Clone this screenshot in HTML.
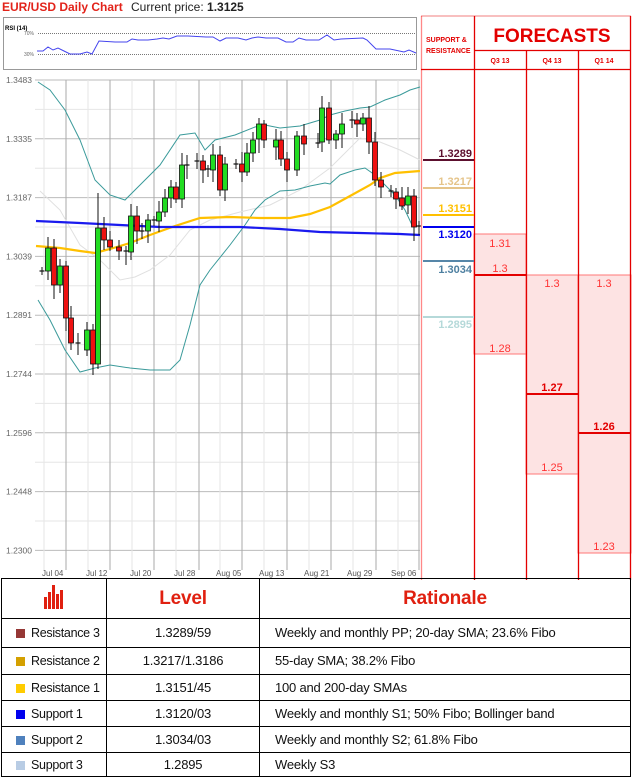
<!DOCTYPE html>
<html><head><meta charset="utf-8"><style>
body{margin:0;width:632px;height:780px;background:#fff;font-family:"Liberation Sans",sans-serif;overflow:hidden;position:relative}
.t{position:absolute;white-space:nowrap}
table{position:absolute;left:1px;top:578px;width:630px;border-collapse:collapse;table-layout:fixed}
td{border:1.5px solid #000;font-size:13px;letter-spacing:-0.2px;color:#111;padding:0;white-space:nowrap;overflow:hidden;line-height:14px}
td.f{font-size:12.5px;letter-spacing:-0.3px}
.sq{display:inline-block;width:9px;height:9px;margin:0 6px 0 14px;vertical-align:-1px}
</style></head><body>
<div class="t" style="left:2px;top:0;font-size:12px;font-weight:bold;color:#e2231a">EUR/USD Daily Chart</div>
<div class="t" style="left:131px;top:0;font-size:12px;color:#222">Current price: <b>1.3125</b></div>
<svg width="632" height="580" style="position:absolute;left:0;top:0">
<rect x="3.5" y="17.5" width="413" height="52" fill="#fff" stroke="#999"/>
<text x="5" y="30" font-size="6" font-family="Liberation Sans" font-weight="bold">RSI (14)</text>
<line x1="38" y1="33.5" x2="416" y2="33.5" stroke="#777" stroke-dasharray="1,1"/>
<line x1="38" y1="54.5" x2="416" y2="54.5" stroke="#777" stroke-dasharray="1,1"/>
<text x="24" y="35" font-size="5" fill="#666" font-family="Liberation Sans">70%</text>
<text x="24" y="56" font-size="5" fill="#666" font-family="Liberation Sans">30%</text>
<polyline fill="none" stroke="#4444ee" stroke-width="1" points="37,51 43,51 48,47 53,50 58,48 64,51 70,54 80,54 87,52 92,54 99,41 115,42 127,42 132,39 138,40 148,40 157,39 163,38 169,39 177,36 188,36 206,37 213,37 220,41 226,38 238,38 246,40 252,38 258,37 266,38 278,38 286,42 293,42 299,38 306,40 319,40 327,35 334,40 341,39 363,38 367,40 376,49 390,49 404,52 409,50 416,53"/>
<rect x="0" y="79" width="420" height="491" fill="#fff"/>
<g id="grid"></g>
<g id="ind"></g>
<g id="cd"></g>
<g font-family="Liberation Sans" font-size="8.5" fill="#666" id="pl"></g>
<g font-family="Liberation Sans" font-size="8" fill="#555">
<text x="42" y="576">Jul 04</text><text x="86" y="576">Jul 12</text><text x="130" y="576">Jul 20</text><text x="174" y="576">Jul 28</text><text x="216" y="576">Aug 05</text><text x="259" y="576">Aug 13</text><text x="304" y="576">Aug 21</text><text x="347" y="576">Aug 29</text><text x="391" y="576">Sep 06</text>
</g>
<rect x="421" y="16" width="210" height="564" fill="#fff"/>
<rect x="474" y="234" width="52" height="120" fill="#fde3e3" stroke="#f77" stroke-width="1"/>
<rect x="526" y="275" width="52" height="199" fill="#fde3e3" stroke="#f77" stroke-width="1"/>
<rect x="578" y="275" width="53" height="278" fill="#fde3e3" stroke="#f77" stroke-width="1"/>
<g stroke="#e30000" stroke-width="1.3">
<line x1="421.5" y1="16" x2="421.5" y2="580" stroke="#f88"/>
<line x1="474.5" y1="16" x2="474.5" y2="580"/>
<line x1="526.5" y1="50" x2="526.5" y2="580"/>
<line x1="578.5" y1="50" x2="578.5" y2="580"/>
<line x1="630.5" y1="16" x2="630.5" y2="580"/>
<line x1="474" y1="50.5" x2="631" y2="50.5"/>
<line x1="421" y1="69.5" x2="631" y2="69.5"/>
<line x1="421" y1="16" x2="631" y2="16" stroke-width="0.6"/>
</g>
<g stroke-width="2">
<line x1="474" y1="275" x2="526" y2="275" stroke="#e30000"/>
<line x1="526" y1="394" x2="578" y2="394" stroke="#e30000"/>
<line x1="578" y1="433" x2="631" y2="433" stroke="#e30000"/>
<line x1="423" y1="160" x2="474" y2="160" stroke="#5c0f2e"/>
<line x1="423" y1="188" x2="474" y2="188" stroke="#e5c48a"/>
<line x1="423" y1="215" x2="474" y2="215" stroke="#ffc000"/>
<line x1="423" y1="227" x2="474" y2="227" stroke="#0000ee"/>
<line x1="423" y1="261" x2="474" y2="261" stroke="#5686a8"/>
<line x1="423" y1="317" x2="474" y2="317" stroke="#b5d9d9"/>
</g>
<g font-family="Liberation Sans" font-size="11" font-weight="bold" text-anchor="end">
<text x="472" y="157" fill="#5c0f2e">1.3289</text>
<text x="472" y="185" fill="#e5c48a">1.3217</text>
<text x="472" y="212" fill="#ffc000">1.3151</text>
<text x="472" y="238" fill="#0000ee">1.3120</text>
<text x="472" y="273" fill="#4d7fa0">1.3034</text>
<text x="472" y="328" fill="#b5d9d9">1.2895</text>
</g>
<g font-family="Liberation Sans" font-size="11" fill="#f33" text-anchor="middle">
<text x="500" y="247">1.31</text><text x="500" y="272">1.3</text><text x="500" y="352">1.28</text>
<text x="552" y="287">1.3</text><text x="552" y="391" font-weight="bold" fill="#e30000">1.27</text><text x="552" y="471">1.25</text>
<text x="604" y="287">1.3</text><text x="604" y="430" font-weight="bold" fill="#e30000">1.26</text><text x="604" y="550">1.23</text>
</g>
<text x="426" y="42" font-size="7" font-weight="bold" fill="#e30000" font-family="Liberation Sans">SUPPORT &amp;</text>
<text x="426" y="53" font-size="7" font-weight="bold" fill="#e30000" font-family="Liberation Sans">RESISTANCE</text>
<text x="552" y="42" font-size="19" font-weight="bold" fill="#e30000" font-family="Liberation Sans" text-anchor="middle">FORECASTS</text>
<g font-size="7" font-weight="bold" fill="#e30000" font-family="Liberation Sans" text-anchor="middle">
<text x="500" y="63">Q3 13</text><text x="552" y="63">Q4 13</text><text x="604" y="63">Q1 14</text></g>
</svg>
<table>
<colgroup><col style="width:105px"><col style="width:153px"><col></colgroup>
<tr style="height:40px"><td style="text-align:center"><svg width="22" height="24" viewBox="0 0 22 24"><g fill="#e02010"><rect x="1" y="12" width="3" height="12"/><rect x="5" y="7" width="3" height="17"/><rect x="9" y="0" width="3" height="24"/><rect x="13" y="9" width="3" height="15"/><rect x="17" y="5" width="3" height="19"/></g></svg></td><td style="text-align:center;font-size:19px;line-height:22px;font-weight:bold;color:#e02010">Level</td><td style="text-align:center;font-size:19px;line-height:22px;font-weight:bold;color:#e02010">Rationale</td></tr>
<tr style="height:29px"><td class="f"><span class="sq" style="background:#953735"></span>Resistance 3</td><td style="text-align:center">1.3289/59</td><td style="padding-left:15px">Weekly and monthly PP; 20-day SMA; 23.6% Fibo</td></tr>
<tr style="height:27px"><td class="f"><span class="sq" style="background:#d4a000"></span>Resistance 2</td><td style="text-align:center">1.3217/1.3186</td><td style="padding-left:15px">55-day SMA; 38.2% Fibo</td></tr>
<tr style="height:26px"><td class="f"><span class="sq" style="background:#ffcc00"></span>Resistance 1</td><td style="text-align:center">1.3151/45</td><td style="padding-left:15px">100 and 200-day SMAs</td></tr>
<tr style="height:26px"><td class="f"><span class="sq" style="background:#0000ee"></span>Support 1</td><td style="text-align:center">1.3120/03</td><td style="padding-left:15px">Weekly and monthly S1; 50% Fibo; Bollinger band</td></tr>
<tr style="height:26px"><td class="f"><span class="sq" style="background:#4f81bd"></span>Support 2</td><td style="text-align:center">1.3034/03</td><td style="padding-left:15px">Weekly and monthly S2; 61.8% Fibo</td></tr>
<tr style="height:24px"><td class="f"><span class="sq" style="background:#b8cce4"></span>Support 3</td><td style="text-align:center">1.2895</td><td style="padding-left:15px">Weekly S3</td></tr>
</table>
<script>
var ns="http://www.w3.org/2000/svg";
function el(p,t,a){var e=document.createElementNS(ns,t);for(var k in a)e.setAttribute(k,a[k]);document.getElementById(p).appendChild(e);return e;}
var labs=["1.3483","1.3335","1.3187","1.3039","1.2891","1.2744","1.2596","1.2448","1.2300"];
for(var i=0;i<9;i++){var y=80+i*58.8;el("grid","line",{x1:35,x2:420,y1:y,y2:y,stroke:"#bbb","stroke-width":1});var t=el("pl","text",{x:6,y:y+3});t.textContent=labs[i];
var y2=y+29.4;if(i<8)el("grid","line",{x1:35,x2:420,y1:y2,y2:y2,stroke:"#e6e6e6","stroke-width":1});}
[66,110,154,199,242,287,331,376,419].forEach(function(x){el("grid","line",{x1:x,x2:x,y1:80,y2:570,stroke:"#aaa","stroke-width":1});});
[44,88,132,176,220,264,309,353,398].forEach(function(x){el("grid","line",{x1:x,x2:x,y1:80,y2:570,stroke:"#e6e6e6","stroke-width":1});});
function pl(pts,c,w){el("ind","polyline",{points:pts,fill:"none",stroke:c,"stroke-width":w});}
pl("40,191 60,210 80,245 100,260 120,280 135,277 150,270 170,255 190,230 210,220 240,212 270,205 300,190 330,168 360,138 380,142 400,150 420,160","#e0e0e0",1);
pl("38,82 50,90 65,110 80,140 95,180 110,195 125,200 140,185 160,165 180,135 195,133 205,150 215,140 235,135 255,127 265,125 280,128 300,126 320,120 330,115 345,111 360,108 370,107 385,100 400,95 410,90 420,87","#3a9a9a",1);
pl("38,300 50,320 65,350 80,372 95,368 110,365 130,368 150,370 170,370 180,360 190,325 200,285 210,270 230,245 245,225 255,210 265,200 280,191 295,190 310,186 325,183 330,184 340,175 355,170 365,168 375,175 385,185 395,195 405,210 412,225","#3a9a9a",1);
pl("36,246 60,248 80,251 95,253 110,249 130,243 150,235 175,226 200,218 230,217 260,218 290,218 310,214 330,207 350,196 370,185 380,178 395,173 420,171","#ffc000",2.2);
pl("36,221 80,223 120,225 160,227 200,227 240,227 280,229 320,232 360,233 400,234 420,235","#1a1aee",2.2);
var C=[[42,271,271],[48,271,248],[54,248,285],[60,285,266],[66,266,318],[71,318,343],[78,343,343],[87,350,330],[93,330,364],[98,364,228],[104,228,240],[110,240,247],[119,247,251],[126,251,251],[131,252,216],[137,216,231],[142,231,232],[148,231,220],[154,220,220],[159,221,212],[165,212,198],[171,198,187],[176,187,199],[182,199,165],[187,165,165],[197,161,161],[203,161,170],[208,169,170],[213,170,155],[220,155,190],[225,190,164],[236,164,164],[242,164,172],[247,172,153],[253,153,140],[259,139,124],[264,124,140],[276,147,140],[281,140,159],[287,159,170],[297,170,136],[304,136,144],[318,143,143],[322,142,108],[329,108,140],[336,140,134],[342,134,124],[352,120,120],[357,120,124],[363,124,118],[369,118,142],[375,142,180],[381,180,187],[391,191,192],[396,192,199],[402,198,206],[408,205,196],[414,196,227],[419,227,226]];
C.forEach(function(c,i){var x=c[0],o=c[1],cl=c[2],t=Math.min(o,cl),b=Math.max(o,cl);var hi=t-4-(i*7%9),lo=b+4+(i*5%11);
if(i==9)hi=193;if(i==43)hi=96;
el("cd","line",{x1:x,x2:x,y1:hi,y2:lo,stroke:"#111","stroke-width":1});
if(b-t<2){el("cd","line",{x1:x-2.5,x2:x+2.5,y1:t,y2:t,stroke:"#111","stroke-width":1.2});}
else el("cd","rect",{x:x-2.5,y:t,width:5,height:b-t,fill:cl<o?"#22dd22":"#ee1111",stroke:"#111","stroke-width":0.8});});
</script>
</body></html>
